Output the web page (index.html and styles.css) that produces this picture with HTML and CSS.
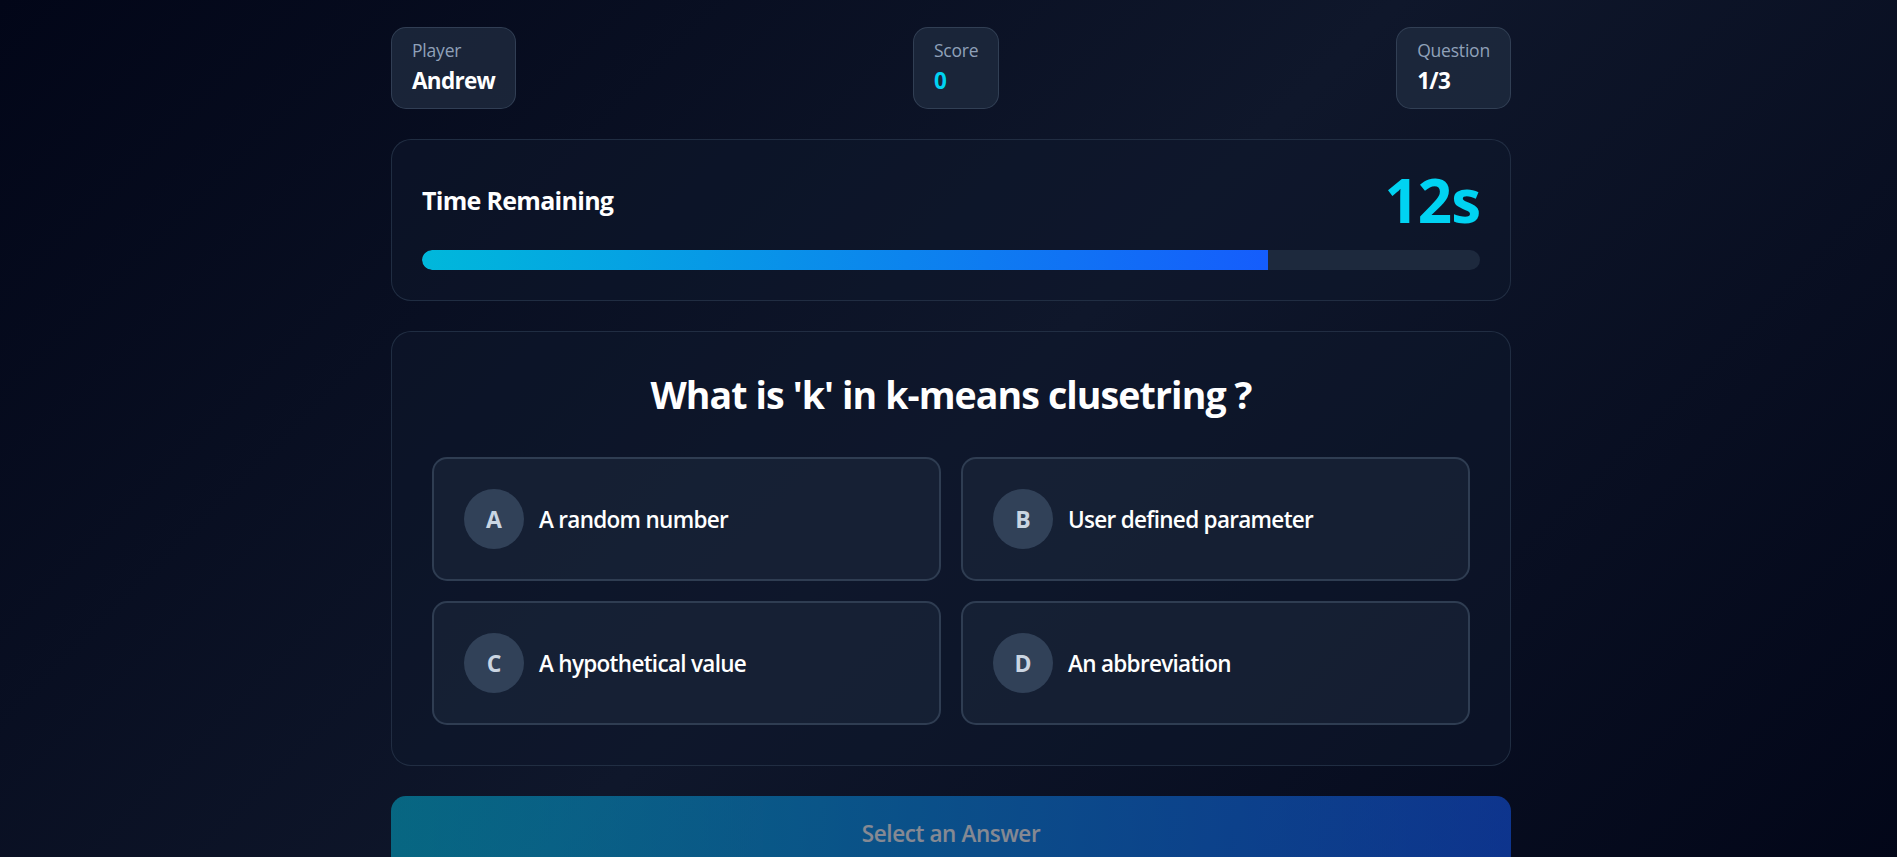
FILE: index.html
```html
<!DOCTYPE html>
<html lang="en">
<head>
<meta charset="utf-8">
<title>Quiz</title>
<link rel="stylesheet" href="styles.css">
</head>
<body>
<div class="page">
  <main class="quiz">
    <div class="stats">
      <div class="stat">
        <div class="stat-label">Player</div>
        <div class="stat-value">Andrew</div>
      </div>
      <div class="stat">
        <div class="stat-label">Score</div>
        <div class="stat-value accent">0</div>
      </div>
      <div class="stat">
        <div class="stat-label">Question</div>
        <div class="stat-value">1/3</div>
      </div>
    </div>

    <section class="panel timer">
      <div class="timer-head">
        <h2 class="timer-title">Time Remaining</h2>
        <div class="timer-value">12s</div>
      </div>
      <div class="track"><div class="fill" style="width: 80%"></div></div>
    </section>

    <section class="panel question">
      <h1 class="question-title">What is 'k' in k-means clusetring ?</h1>
      <div class="options">
        <button class="option"><span class="letter">A</span><span class="option-text">A random number</span></button>
        <button class="option"><span class="letter">B</span><span class="option-text">User defined parameter</span></button>
        <button class="option"><span class="letter">C</span><span class="option-text">A hypothetical value</span></button>
        <button class="option"><span class="letter">D</span><span class="option-text">An abbreviation</span></button>
      </div>
    </section>

    <button class="submit" disabled>Select an Answer</button>
  </main>
</div>
</body>
</html>
```

FILE: styles.css
```css
* { box-sizing: border-box; }

html, body {
  margin: 0;
  padding: 0;
}

body {
  min-height: 100vh;
  background: linear-gradient(135deg, #020618 0%, #0f172b 50%, #020618 100%);
  font-family: "Segoe UI", "Open Sans", "Noto Sans", sans-serif;
  color: #ffffff;
}

.page {
  padding: 27px 0 30px 5px;
}

.quiz {
  width: 1120px;
  margin: 0 auto;
}

.stats {
  display: flex;
  justify-content: space-between;
  align-items: flex-start;
  margin-bottom: 30px;
}

.stat {
  background: rgba(29, 41, 61, 0.85);
  border: 1px solid rgba(69, 85, 108, 0.55);
  border-radius: 15px;
  padding: 10px 20px;
}

.stat-label {
  font-size: 17.5px;
  line-height: 25px;
  color: #90a1b9;
  letter-spacing: -0.2px;
}

.stat-value {
  font-size: 22.5px;
  line-height: 35px;
  font-weight: 700;
  color: #ffffff;
  letter-spacing: -0.7px;
}

.stat-value.accent { color: #00d3f2; }

.panel {
  background: rgba(15, 23, 43, 0.55);
  border: 1px solid rgba(39, 52, 74, 0.8);
  border-radius: 20px;
}

.timer {
  padding: 30px;
  margin-bottom: 30px;
}

.timer-head {
  display: flex;
  justify-content: space-between;
  align-items: center;
  margin-bottom: 20px;
}

.timer-title {
  margin: 0;
  font-size: 25px;
  line-height: 35px;
  font-weight: 700;
  letter-spacing: -0.7px;
}

.timer-value {
  font-size: 60px;
  line-height: 60px;
  font-weight: 700;
  color: #00d3f2;
  letter-spacing: -1px;
}

.track {
  height: 20px;
  border-radius: 999px;
  background: #1d293d;
  overflow: hidden;
}

.fill {
  height: 100%;
  border-radius: 999px 0 0 999px;
  background: linear-gradient(90deg, #00b8db, #155dfc);
}

.question {
  padding: 40px;
  margin-bottom: 30px;
}

.question-title {
  margin: 0 0 40px;
  text-align: center;
  font-size: 37.5px;
  line-height: 45px;
  font-weight: 700;
  letter-spacing: -0.9px;
}

.options {
  display: grid;
  grid-template-columns: 1fr 1fr;
  gap: 20px;
}

.option {
  display: flex;
  align-items: center;
  gap: 15px;
  padding: 30px;
  background: rgba(29, 41, 61, 0.5);
  border: 2px solid #2f3d52;
  border-radius: 15px;
  font-family: inherit;
  text-align: left;
  cursor: pointer;
}

.letter {
  flex: none;
  width: 60px;
  height: 60px;
  border-radius: 50%;
  background: #314158;
  color: #cad5e2;
  display: flex;
  align-items: center;
  justify-content: center;
  font-size: 23px;
  font-weight: 700;
}

.option-text {
  color: #ffffff;
  font-size: 22.5px;
  line-height: 35px;
  font-weight: 600;
  letter-spacing: -0.7px;
}

.submit {
  display: block;
  width: 100%;
  padding: 20px;
  border: none;
  border-radius: 15px;
  background: linear-gradient(90deg, #00b8db, #155dfc);
  color: #ffffff;
  font-family: inherit;
  font-size: 22.5px;
  line-height: 35px;
  font-weight: 600;
  letter-spacing: -0.4px;
  opacity: 0.5;
}
```
